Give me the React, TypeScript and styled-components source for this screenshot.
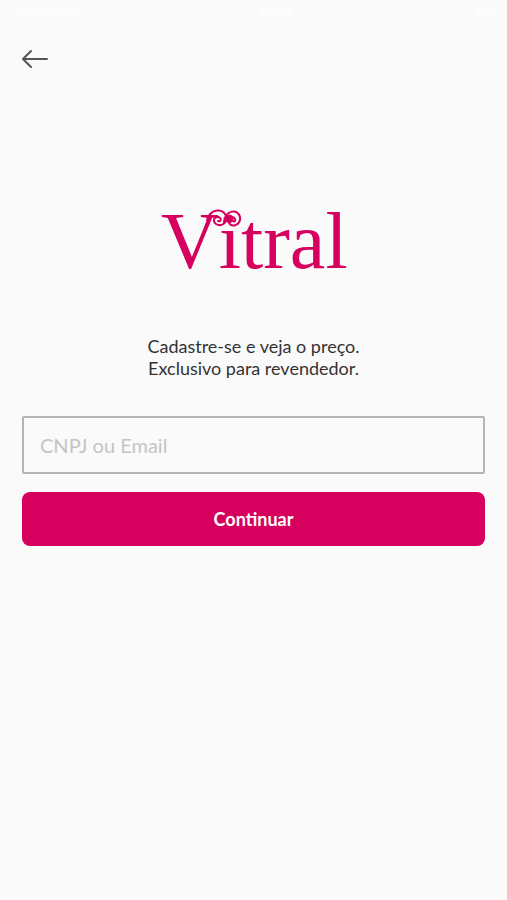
import React from "react";
import styled, { createGlobalStyle } from "styled-components";

const GlobalStyle = createGlobalStyle`
  *, *::before, *::after { box-sizing: border-box; }
  body {
    margin: 0;
    background: #fafafa;
    color: #333;
    font-family: Lato, "Open Sans", sans-serif;
  }
`;

const Screen = styled.div`
  display: flex;
  flex-direction: column;
  min-height: 100vh;
`;

const StatusBar = styled.div`
  display: flex;
  align-items: center;
  justify-content: space-between;
  height: 26px;
  padding: 0 11px 0 16px;
`;

const StatusMark = styled.span<{ $width: number }>`
  width: ${(p) => p.$width}px;
  height: 8px;
  border-radius: 4px;
  background: #fdfdfd;
`;

const Header = styled.header`
  display: flex;
  padding: 17px 16px;
`;

const BackButton = styled.button`
  display: flex;
  padding: 6px;
  border: 0;
  background: none;
  color: #555;
  cursor: pointer;
`;

const Main = styled.main`
  display: flex;
  flex-direction: column;
  align-items: center;
  padding: 112px 22px 24px;
`;

const Logo = styled.svg`
  display: block;
  overflow: visible;
  fill: #d6005e;

  text {
    font-family: "Liberation Serif", serif;
    font-size: 80px;
    font-kerning: none;
  }

  path {
    fill: none;
    stroke: #d6005e;
    stroke-width: 2;
    stroke-linecap: round;
  }
`;

const Intro = styled.p`
  margin: 59px 0 37px;
  font-size: 18px;
  line-height: 22px;
  text-align: center;
`;

const Form = styled.form`
  display: flex;
  flex-direction: column;
  gap: 18px;
  width: 100%;
`;

const Field = styled.input`
  width: 100%;
  height: 58px;
  padding: 0 16px;
  border: 2px solid #b5b5b5;
  border-radius: 2px;
  background: transparent;
  color: #333;
  font-family: inherit;
  font-size: 20px;

  &::placeholder {
    color: #c4c4c4;
    opacity: 1;
  }
`;

const SubmitButton = styled.button`
  height: 54px;
  border: 0;
  border-radius: 8px;
  background: #d6005e;
  color: #fff;
  font-family: inherit;
  font-size: 18px;
  font-weight: 700;
  cursor: pointer;
`;

export default function App() {
  return (
    <>
      <GlobalStyle />
      <Screen>
        <StatusBar aria-hidden="true">
          <StatusMark $width={64} />
          <StatusMark $width={36} />
          <StatusMark $width={22} />
        </StatusBar>
        <Header>
          <BackButton type="button" aria-label="Voltar">
            <svg width="28" height="20" viewBox="0 0 28 20" fill="none" stroke="currentColor" strokeWidth="2" strokeLinecap="round">
              <path d="M25 10H1M9 2L1 10l8 8" />
            </svg>
          </BackButton>
        </Header>
        <Main>
          <Logo width="186" height="72" viewBox="0 0 186 72" role="img" aria-label="Vitral">
            <text x="0" y="64">Vitral</text>
            <path d="M46 16C50 4 62 4 65 12C67 19 60 23 55 20C50 16 55 11 59 14C61 16 59 18 57 17" />
            <path d="M63 18C64 6 77 4 79 13C80 21 71 24 68 19C66 14 72 11 74 15C75 17 73 18 72 17" />
          </Logo>
          <Intro>
            Cadastre-se e veja o preço.
            <br />
            Exclusivo para revendedor.
          </Intro>
          <Form onSubmit={(e) => e.preventDefault()}>
            <Field type="text" name="login" aria-label="CNPJ ou Email" placeholder="CNPJ ou Email" />
            <SubmitButton type="submit">Continuar</SubmitButton>
          </Form>
        </Main>
      </Screen>
    </>
  );
}
